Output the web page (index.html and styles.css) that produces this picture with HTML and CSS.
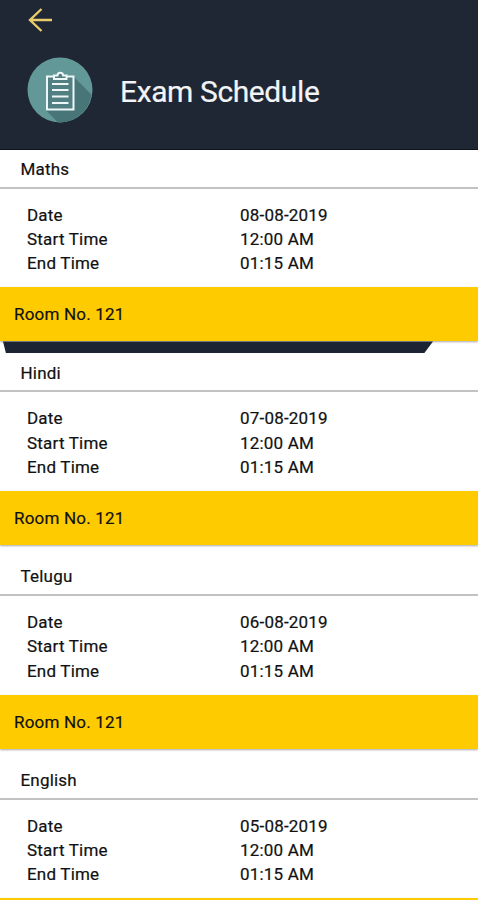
FILE: index.html
```html
<!DOCTYPE html>
<html lang="en">
<head>
    <meta charset="UTF-8">
    <meta name="viewport" content="width=device-width, initial-scale=1.0">
    <title>Exam Schedule</title>
    <link rel="stylesheet" href="styles.css">
</head>
<body>
    <header class="header">
        <svg class="back-icon" viewBox="0 0 26 26" width="26" height="26">
            <path d="M25 13H3M14.5 2L3 13l11.5 11" />
        </svg>
        <div class="header-title">
            <svg class="exam-icon" viewBox="0 0 66 66" width="66" height="66">
                <circle cx="33" cy="33" r="32.5" fill="#639899" />
                <path d="M46 19L64.5 37.5A32.5 32.5 0 0 1 31 65.5L19 53.5z" fill="#487578" />
                <rect x="20" y="19.500" width="26.500" height="33" fill="#527f81" />
                <rect x="20" y="19.500" width="26.500" height="33" class="line" />
                <path d="M27 22v-3.500h3.500a2.800 2.800 0 0 1 5.600 0H39.500V22z" fill="#527f81" class="clip" />
                <path d="M25 27h16.500M25 33h16.500M25 39.500h16.500M25 46h16.500" class="line rows" />
            </svg>
            <h1>Exam Schedule</h1>
        </div>
    </header>

    <main class="schedule">
        <section class="card">
            <h2 class="subject">Maths</h2>
            <dl class="details">
                <dt>Date</dt><dd>08-08-2019</dd>
                <dt>Start Time</dt><dd>12:00 AM</dd>
                <dt>End Time</dt><dd>01:15 AM</dd>
            </dl>
            <div class="room">Room No. 121</div>
            <div class="gap"><div class="strip"></div></div>
        </section>

        <section class="card">
            <h2 class="subject">Hindi</h2>
            <dl class="details">
                <dt>Date</dt><dd>07-08-2019</dd>
                <dt>Start Time</dt><dd>12:00 AM</dd>
                <dt>End Time</dt><dd>01:15 AM</dd>
            </dl>
            <div class="room">Room No. 121</div>
            <div class="gap"></div>
        </section>

        <section class="card">
            <h2 class="subject">Telugu</h2>
            <dl class="details">
                <dt>Date</dt><dd>06-08-2019</dd>
                <dt>Start Time</dt><dd>12:00 AM</dd>
                <dt>End Time</dt><dd>01:15 AM</dd>
            </dl>
            <div class="room">Room No. 121</div>
            <div class="gap"></div>
        </section>

        <section class="card">
            <h2 class="subject">English</h2>
            <dl class="details">
                <dt>Date</dt><dd>05-08-2019</dd>
                <dt>Start Time</dt><dd>12:00 AM</dd>
                <dt>End Time</dt><dd>01:15 AM</dd>
            </dl>
            <div class="room cut"></div>
        </section>
    </main>
</body>
</html>
```

FILE: styles.css
```css
* {
    box-sizing: border-box;
    margin: 0;
    padding: 0;
}

body {
    height: 900px;
    overflow: hidden;
    background: #fff;
    color: #111;
    font-family: Roboto, "Liberation Sans", sans-serif;
    font-size: 17px;
    letter-spacing: 0.2px;
    -webkit-text-stroke: 0.2px;
}

/* Header */
.header {
    height: 150px;
    padding: 7px 27px 0;
    background: #1f2735;
    border-bottom: 1px solid #10141d;
}

.back-icon {
    display: block;
    fill: none;
    stroke: #e9cc6c;
    stroke-width: 2.4;
}

.header-title {
    display: flex;
    align-items: center;
    gap: 27px;
    margin-top: 24px;
}

.header-title h1 {
    padding-top: 2px;
    color: #f2f4f7;
    font-size: 30px;
    font-weight: 400;
    letter-spacing: -0.4px;
}

.exam-icon .line,
.exam-icon .clip {
    stroke: #eef7f8;
    stroke-width: 2;
}

.exam-icon .line {
    fill: none;
}

.exam-icon .rows {
    stroke-width: 1.8;
}

/* Exam cards */
.schedule {
    height: 750px;
    overflow: hidden;
}

.subject {
    height: 38.6px;
    padding-left: 20.5px;
    border-bottom: 2px solid #c2c2c2;
    font-size: 17px;
    font-weight: 400;
    line-height: 39px;
}

.details {
    display: grid;
    grid-template-columns: 213px 1fr;
    height: 98.8px;
    padding: 14px 0 12px 27px;
    line-height: 24px;
}

.room {
    height: 54px;
    padding-left: 14px;
    background: #fecb00;
    box-shadow: 0 1px 2px rgba(0, 0, 0, 0.35);
    line-height: 54px;
}

.room.cut {
    height: 2px;
}

.gap {
    height: 12.3px;
}

/* Slanted piece of the dark backdrop showing between the cards */
.strip {
    position: relative;
    width: 430px;
    height: 12px;
    margin-left: 3px;
    background: #1c2433;
    clip-path: polygon(0 0, 100% 0, 421px 100%, 3px 100%);
}
```
